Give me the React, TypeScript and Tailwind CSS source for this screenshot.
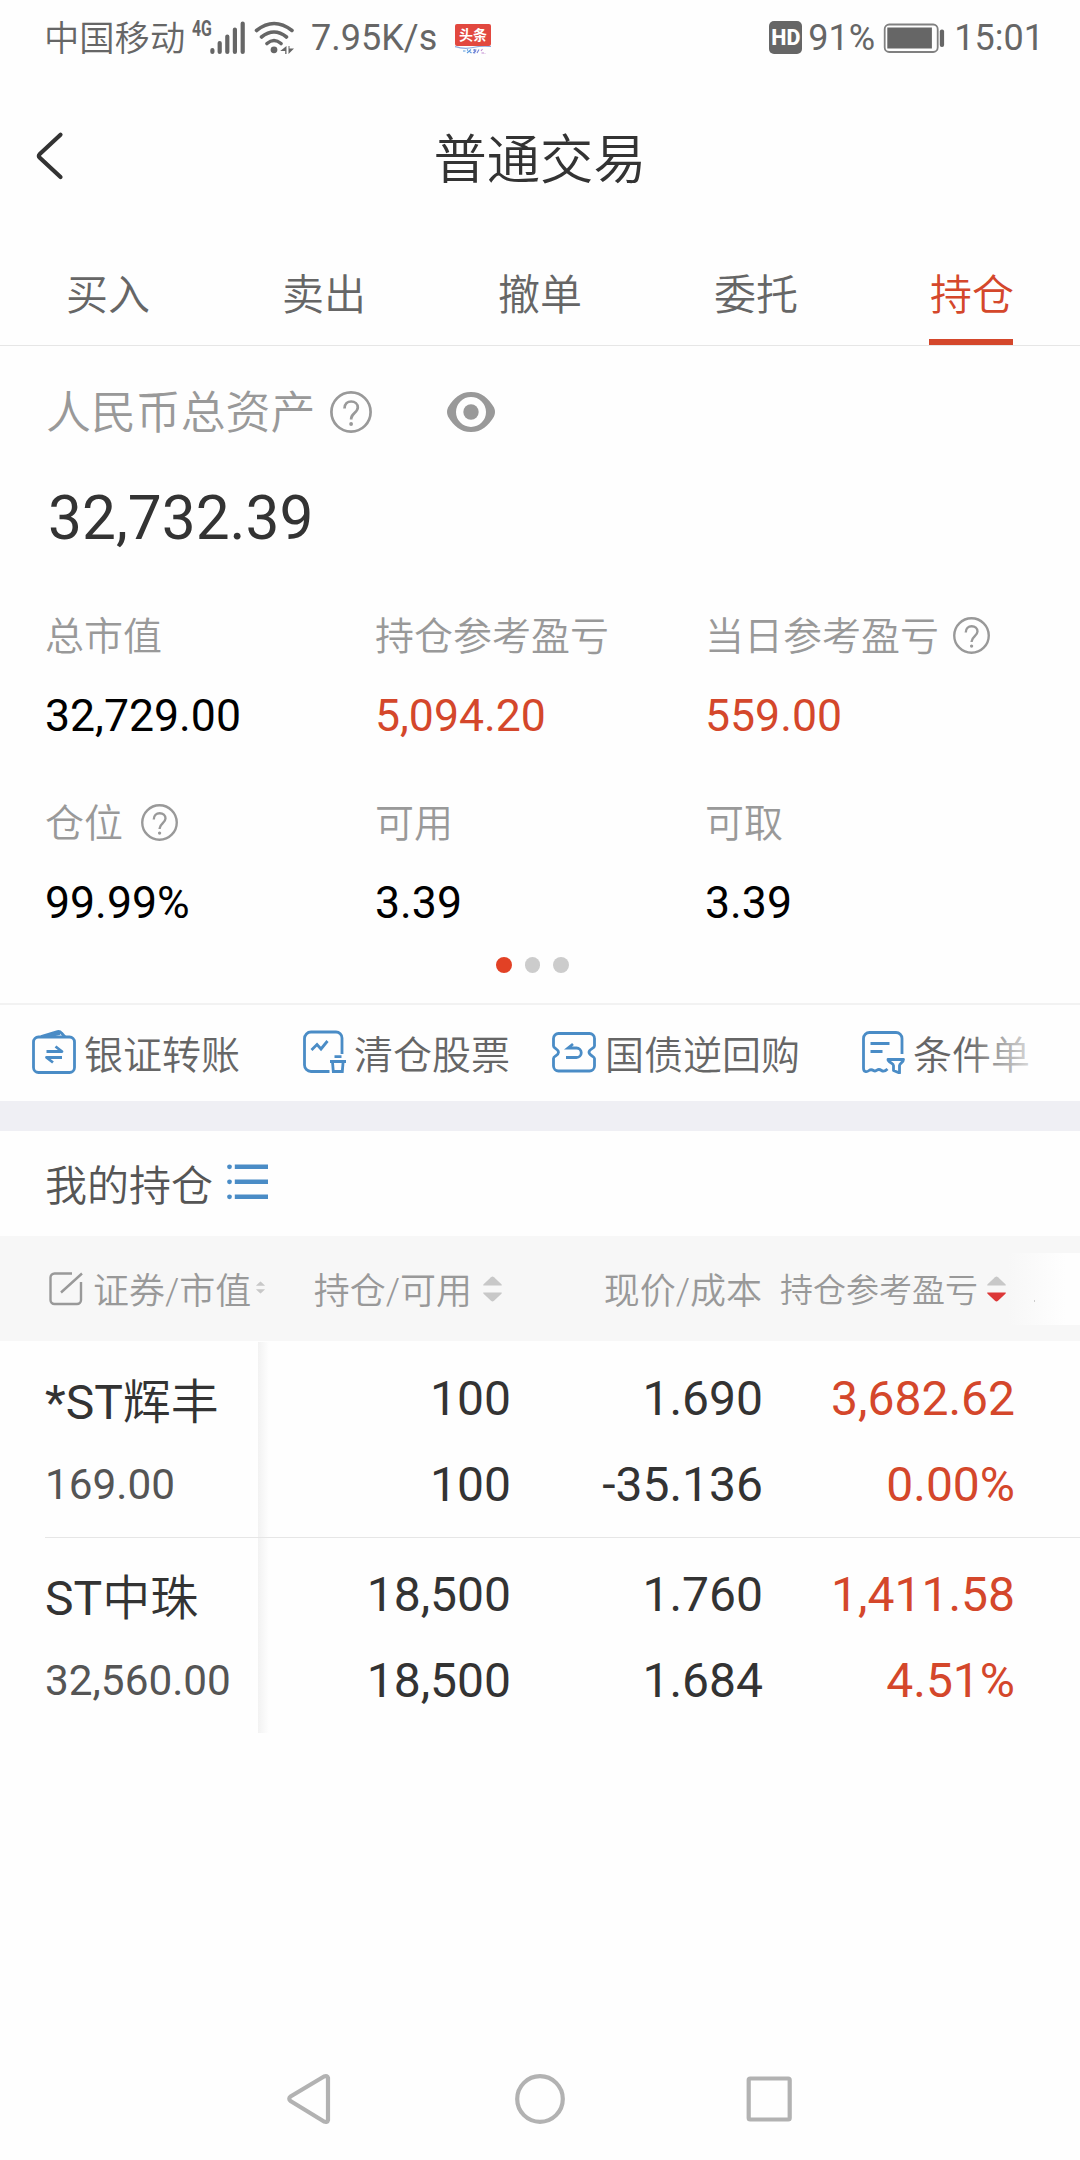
import React from "react";

const BLUE = "#4a8cc6";

function StatusBar() {
  return (
    <div className="flex h-[75px] items-center text-[36px] leading-[44px] text-[#666]">
      <span className="ml-[44px] w-[148px] whitespace-nowrap pt-[3px] text-[35.3px] font-[350]">中国移动</span>
      <div className="h-[35px] w-[18px] overflow-visible">
        <span className="block origin-top-left scale-x-[.72] pt-px text-[22px] font-bold leading-[16px]">4G</span>
      </div>
      <svg width="36" height="36" viewBox="210 18 36 36" fill="none" stroke="#666" strokeWidth="4.2" strokeLinecap="round">
        <path d="M212.4 48v2M219.7 41v9M227.3 34.5v15.500M234.900 27.500v22.500M242.700 21.500v28.500" />
      </svg>
      <svg className="ml-[8px]" width="42" height="36" viewBox="254 18 42 36" fill="none" stroke="#666" strokeWidth="3.600" strokeLinecap="round">
        <path d="M256.500 28.500Q274 14.500 292 28.500M261.500 35Q274 25 286.500 35M267 41.500Q274 35.500 281 41.500" />
        <circle cx="274" cy="47.800" r="3.400" fill="#666" stroke="none" />
        <path d="M286.500 44v8h-1.300v-3h-5zM288.500 52v-8h1v2.500h4.500z" fill="#666" stroke="none" />
      </svg>
      <span className="ml-[15px] w-[144px] whitespace-nowrap">7.95K/s</span>
      <div className="flex h-[36px] w-[36px] flex-col items-center">
        <div className="mt-[4px] flex h-[22px] w-[36px] items-center justify-center rounded-[2px] bg-[#e2483f] text-[14px] font-bold leading-[22px] text-white">头条</div>
        <svg width="36" height="9" viewBox="455 45 36 9" fill="none">
          <path d="M455 45.500q9 3 18 1t18-1" stroke="#8fa9dc" strokeWidth="1.200" />
          <path d="M463 50h2.500M467 48.500l1 1M467 52l4-3.500M469 50l2.500 2" stroke="#5a9ade" strokeWidth="1.100" />
          <path d="M473 49h3.500M474.700 48v4.500M473 52l3-2M477 52l2-3.500" stroke="#7387d8" strokeWidth="1.100" />
          <path d="M481 50l1.500-2M481.500 52h2.500M485 52v.6" stroke="#c08ad0" strokeWidth="1.100" />
        </svg>
      </div>
      <div className="ml-auto flex items-center pr-[36px]">
        <div className="mr-[6px] flex h-[33px] w-[33px] items-center justify-center rounded-[5px] bg-[#666] text-[21.5px] font-extrabold leading-none text-white">HD</div>
        <span className="w-[75px] whitespace-nowrap">91%</span>
        <svg width="62" height="32" viewBox="883 20.500 62 32" fill="none">
          <rect x="884.700" y="23" width="53" height="27.500" rx="4.500" stroke="#808080" strokeWidth="1.800" />
          <rect x="887.300" y="26" width="44.600" height="21" fill="#666" />
          <rect x="939.800" y="28" width="4.300" height="17.500" rx="2" fill="#666" />
        </svg>
        <span className="ml-[9px]">15:01</span>
      </div>
    </div>
  );
}

function Help({ size }: { size: number }) {
  return (
    <svg width={size} height={size} viewBox="0 0 42 42" fill="none" stroke="#999" strokeWidth="2.700" className="shrink-0">
      <circle cx="21" cy="21" r="19.600" />
      <path d="M14.500 17.500c0-4.500 3-7 6.700-7s6.600 2.500 6.600 6c0 4.800-6.600 6.200-6.600 11v1" />
      <circle cx="21.100" cy="33" r="1.900" fill="#999" stroke="none" />
    </svg>
  );
}

function Sort({ width, height, down }: { width: number; height: number; down?: boolean }) {
  return (
    <svg width={width} height={height} viewBox="0 0 19 26" className="shrink-0">
      <path d="M.300 9.500Q0 8.800.800 8L8 1.200q1.500-1.300 3 0L18.200 8q.800.800.500 1.500z" fill="#c8c8c8" />
      <path d="M.300 16.500Q0 17.200.800 18L8 24.800q1.500 1.300 3 0L18.200 18q.800-.800.500-1.500z" fill={down ? "#dc3838" : "#c8c8c8"} />
    </svg>
  );
}

const tabs = ["买入", "卖出", "撤单", "委托", "持仓"];

const stats = [
  { label: "总市值", value: "32,729.00" },
  { label: "持仓参考盈亏", value: "5,094.20", red: true },
  { label: "当日参考盈亏", value: "559.00", red: true, help: true },
  { label: "仓位", value: "99.99%", help: true, wide: true },
  { label: "可用", value: "3.39" },
  { label: "可取", value: "3.39" },
];

const holdings = [
  { mark: "*ST", name: "辉丰", worth: "169.00", qty: ["100", "100"], price: ["1.690", "-35.136"], gain: ["3,682.62", "0.00%"] },
  { mark: "ST", name: "中珠", worth: "32,560.00", qty: ["18,500", "18,500"], price: ["1.760", "1.684"], gain: ["1,411.58", "4.51%"] },
];

function TransferIcon() {
  return (
    <svg width="44" height="44" viewBox="0 0 44 44" fill="none" stroke={BLUE} strokeWidth="2.800" strokeLinejoin="round">
      <rect x="1.500" y="7" width="41" height="35.500" rx="5" />
      <path d="M9 6.500 25.500 1.600q2.500-.500 4 1.400l3.500 4M16 6.500l12-3" />
      <path d="M14.500 21.500H30l-6.500-5M30 27.500H14.500l6.500 5" />
    </svg>
  );
}
function ClearIcon() {
  return (
    <svg width="43" height="44" viewBox="0 0 43 44" fill="none" stroke={BLUE} strokeWidth="2.800">
      <path d="M26.500 41.500H8a6.500 6.500 0 0 1-6.500-6.500V8.500A6.500 6.500 0 0 1 8 2h25a6 6 0 0 1 6 6v16" />
      <path d="M8.500 20l5.500-5.500 4 4.500 6.500-8" />
      <path d="M27 31.500h16M31.500 26.700h7M29.500 32l.800 9.500h9l.800-9.500" />
    </svg>
  );
}
function BondIcon() {
  return (
    <svg width="44" height="44" viewBox="0 0 44 44" fill="none" stroke={BLUE} strokeWidth="2.800">
      <path d="M6.500 3.500h31a5 5 0 0 1 5 5v7.500c0 2.500-5.500 3-5.500 6.300s5.500 3.800 5.500 6.200V36a5 5 0 0 1-5 5h-31a5 5 0 0 1-5-5v-7.500c0-2.400 5-2.900 5-6.200s-5-3.800-5-6.300V8.500a5 5 0 0 1 5-5z" />
      <path d="M14 27.500h10.500a4.700 4.700 0 0 0 0-9.500H16l5-4" />
    </svg>
  );
}
function ConditionIcon() {
  return (
    <svg width="43" height="44" viewBox="0 0 43 44" fill="none" stroke={BLUE} strokeWidth="2.800" strokeLinejoin="round">
      <path d="M40 24V8.500a6 6 0 0 0-6-6H7.500a6 6 0 0 0-6 6V38c0 4 3 4.500 5.500 2.500 2-1.500 3-1 4.500 0 1.500 1 2.500.500 3.500-.300 1.500-1.200 3-.800 4.500.300 2.500 1.800 4.500 0 6-1.500" />
      <path d="M8.500 13.500H27.500M8.500 21.500h12" />
      <path d="M26 29.500h15.500c0 3-4 3.500-4 6V43l-6-2.500V35.500c0-2.500-5.500-3-5.500-6z" />
    </svg>
  );
}

export default function App() {
  return (
    <div className="flex h-[2160px] w-[1080px] flex-col overflow-hidden bg-[#fefefe] font-[Roboto,'Noto_Sans_CJK_SC',sans-serif] text-[#333]">
      <StatusBar />

      <header className="relative flex h-[170px] items-center justify-center text-[53.3px] leading-[60px]">
        <svg className="absolute left-[36px] top-[56px]" width="28" height="50" viewBox="36 131 28 50" fill="none" stroke="#333" strokeWidth="4.200" strokeLinecap="round">
          <path d="M60.500 134.800 39.800 154q-2 1.900 0 3.800L60.500 177" />
        </svg>
        <h1 className="pt-[2px] font-[350]">普通交易</h1>
      </header>

      <nav className="grid h-[101px] grid-cols-5 border-b border-[#e6e6e6] text-[42px] font-[350] text-[#666]">
        {tabs.map((t, i) => (
          <div key={t} className={i === 4 ? "relative flex items-center justify-center text-[#d4472b]" : "flex items-center justify-center"}>
            <span>{t}</span>
            {i === 4 && <div className="absolute bottom-0 left-[65px] h-[6px] w-[84px] bg-[#d4472b]" />}
          </div>
        ))}
      </nav>

      <section className="h-[657px] pl-[45px] pt-[36px]">
        <div className="flex h-[60px] items-center text-[#999]">
          <span className="w-[285px] whitespace-nowrap pl-[1px] pt-[3px] text-[44.900px] font-[350]">人民币总资产</span>
          <Help size={42} />
          <svg className="ml-[75px]" width="48" height="42" viewBox="0 0 48 42">
            <path d="M24 1C35 1 41 7 47 16.500q2 4.500 0 9C41 35 35 41 24 41S7 35 1 25.500q-2-4.500 0-9C7 7 13 1 24 1zM24 6a15 15 0 1 0 0 30 15 15 0 1 0 0-30z" fill="#999" fillRule="evenodd" />
            <circle cx="24" cy="21" r="7.700" fill="#999" />
          </svg>
        </div>
        <div className="mt-[41px] pl-[3px] text-[60.4px] leading-[72px]">32,732.39</div>
        <div className="mt-[55px] grid grid-cols-[330px_330px_330px] gap-y-[51px]">
          {stats.map((s) => (
            <div key={s.label}>
              <div className="flex h-[54px] items-center text-[39px] font-[350] text-[#999]">
                <span className={s.wide ? "mr-[18px] whitespace-nowrap" : "mr-[14px] whitespace-nowrap"}>{s.label}</span>
                {s.help && <div className="pb-[3px]"><Help size={37} /></div>}
              </div>
              <div className={s.red ? "mt-[22px] text-[44.6px] leading-[60px] text-[#d4472b]" : "mt-[22px] text-[44.6px] leading-[60px] text-black"}>{s.value}</div>
            </div>
          ))}
        </div>
        <div className="ml-[451px] mt-[24px] flex gap-[13px]">
          <div className="size-[15.500px] rounded-full bg-[#e24125]" />
          <div className="size-[15.500px] rounded-full bg-[#ccc]" />
          <div className="size-[15.500px] rounded-full bg-[#ccc]" />
        </div>
      </section>

      <section className="relative flex h-[98px] items-center border-t-2 border-[#f2f2f2] text-[39px] font-[350] leading-[44px] text-[#666]">
        <div className="ml-[32px] flex items-center gap-[8px]">
          <div className="pb-[2px]"><TransferIcon /></div>
          <span className="whitespace-nowrap pt-[6px]">银证转账</span>
        </div>
        <div className="ml-[63px] flex items-center gap-[8px]">
          <div className="pb-[2px]"><ClearIcon /></div>
          <span className="whitespace-nowrap pt-[6px]">清仓股票</span>
        </div>
        <div className="ml-[42px] flex items-center gap-[9px]">
          <div className="pb-[2px]"><BondIcon /></div>
          <span className="whitespace-nowrap pt-[6px]">国债逆回购</span>
        </div>
        <div className="ml-[62px] flex items-center gap-[8px]">
          <div className="pb-[2px]"><ConditionIcon /></div>
          <span className="whitespace-nowrap pt-[6px]">条件单</span>
        </div>
        <div className="absolute right-0 top-0 h-[96px] w-[115px] bg-linear-to-r from-[#fefefe00] to-[#fefefe] to-[75%]" />
      </section>

      <div className="h-[30px] bg-[#efeff4]" />

      <section className="flex h-[105px] items-center pl-[45px] text-[42px]">
        <span className="pt-[6px] font-[350] text-[#555]">我的持仓</span>
        <svg className="mb-[3px] ml-[14px]" width="42" height="38" viewBox="0 0 42 38" fill={BLUE}>
          <circle cx="2.500" cy="3.800" r="2.400" />
          <circle cx="2.500" cy="18.800" r="2.400" />
          <circle cx="2.500" cy="33.800" r="2.400" />
          <path d="M7.800 1.500H41v4.500H7.800zM7.800 16.500H41v4.500H7.800zM7.800 31.500H41v4.500H7.800z" />
        </svg>
      </section>

      <section className="relative flex h-[105px] items-center bg-[#f7f7f7] text-[36px] font-[350] text-[#999]">
        <div className="flex w-[268px] items-center pl-[49px]">
          <svg width="34" height="34" viewBox="0 0 34 34" fill="none" stroke="#999" strokeWidth="2.400">
            <path d="M23 1.500H5.500A4 4 0 0 0 1.500 5.500V28a4 4 0 0 0 4 4H28a4 4 0 0 0 4-4V10M12 20.500 33 1.500" />
          </svg>
          <span className="ml-[10px] w-[159px] whitespace-nowrap pt-[6px]">证券/市值</span>
          <div className="ml-[4px] pb-[2px]"><Sort width={9} height={13} /></div>
        </div>
        <div className="flex w-[234px] items-center justify-end gap-[11px]">
          <span className="whitespace-nowrap pt-[6px]">持仓/可用</span>
          <Sort width={19} height={26} />
        </div>
        <div className="w-[260px] text-right">
          <span className="block pt-[6px]">现价/成本</span>
        </div>
        <div className="flex w-[244px] items-center justify-end gap-[9px] text-[33px]">
          <span className="whitespace-nowrap pt-[4px]">持仓参考盈亏</span>
          <Sort width={19} height={26} down />
        </div>
        <div className="absolute right-0 top-[17px] h-[72px] w-[72px] bg-linear-to-r from-[#f7f7f7] to-[#fefefe] to-[80%]">
          <div className="ml-[26px] mt-[47px] h-[2px] w-px bg-[#ccc]" />
        </div>
      </section>

      <section className="relative mt-px text-[48px] leading-[86px]">
        <div className="absolute left-[258px] top-0 h-[391px] w-[11px] bg-linear-to-r from-[#f2f2f2] to-[#fefefe]" />
        {holdings.map((h, i) => (
          <div key={h.name} className="relative flex h-[196px] pt-[14px]">
            <div className="w-[258px] pl-[45px] pt-[4px]">
              <div className="whitespace-nowrap">
                {h.mark}
                <span className="font-[350]">{h.name}</span>
              </div>
              <div className="text-[42.3px] leading-[77px] text-[#555]">{h.worth}</div>
            </div>
            <div className="w-[253px] text-right">
              {h.qty.map((v, k) => <div key={k}>{v}</div>)}
            </div>
            <div className="w-[252px] text-right">
              {h.price.map((v, k) => <div key={k}>{v}</div>)}
            </div>
            <div className="w-[252px] text-right text-[#d4472b]">
              {h.gain.map((v, k) => <div key={k}>{v}</div>)}
            </div>
            {i === 0 && <div className="absolute bottom-0 left-[45px] right-0 h-px bg-[#e6e6e6]" />}
          </div>
        ))}
      </section>

      <footer className="mt-auto flex h-[122px] items-center justify-center">
        <svg width="506" height="52" viewBox="287 2073 506 52" fill="none" stroke="#b2b2b2" strokeWidth="4.200" strokeLinejoin="round">
          <path d="M290.500 2096.500q-2.500 2.300 0 4.500L324 2121.500q3.500 1.200 4-1.500v-42q-.500-2.700-4-1.500z" />
          <circle cx="540" cy="2099" r="22.800" />
          <rect x="748.700" y="2078.500" width="41" height="41" rx="1.500" />
        </svg>
      </footer>
    </div>
  );
}
